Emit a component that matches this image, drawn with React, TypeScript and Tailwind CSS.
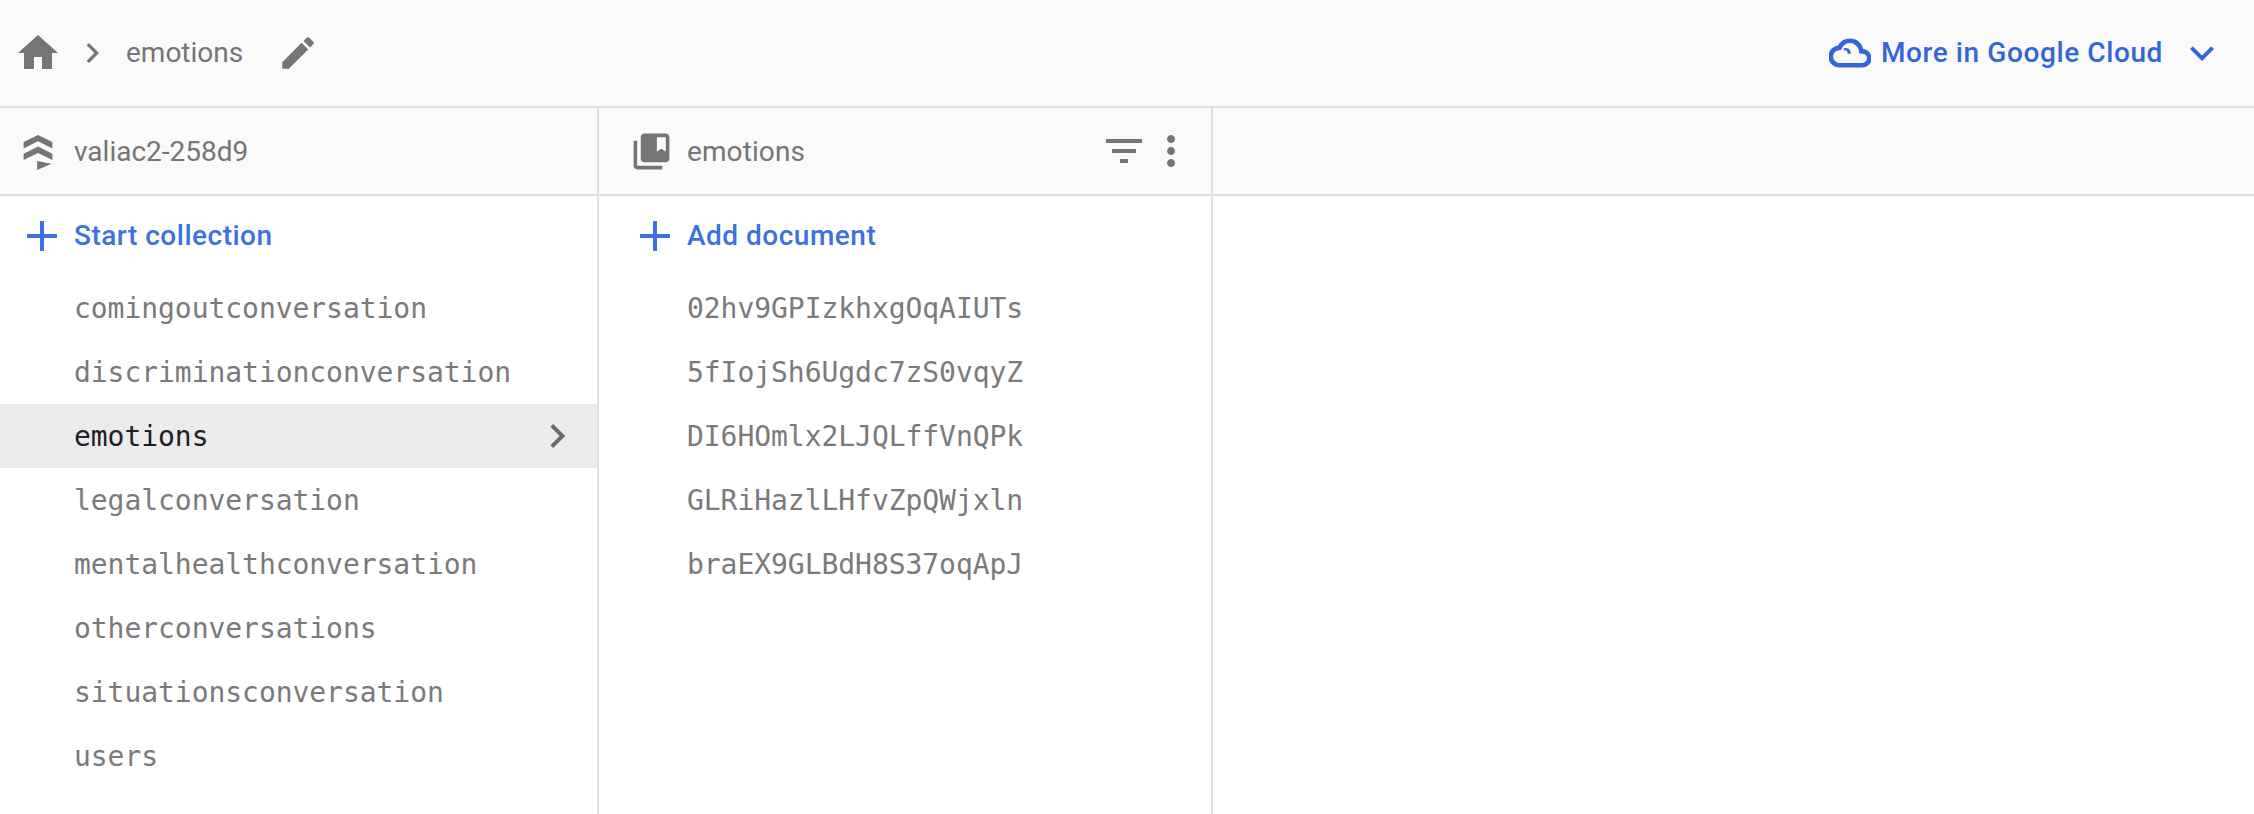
import React from "react";

const SANS = "font-['Roboto',sans-serif]";
const MONO = "font-['DejaVu_Sans_Mono',monospace]";

const collections = [
  "comingoutconversation",
  "discriminationconversation",
  "emotions",
  "legalconversation",
  "mentalhealthconversation",
  "otherconversations",
  "situationsconversation",
  "users",
];

const documents = [
  "02hv9GPIzkhxgOqAIUTs",
  "5fIojSh6Ugdc7zS0vqyZ",
  "DI6HOmlx2LJQLffVnQPk",
  "GLRiHazlLHfvZpQWjxln",
  "braEX9GLBdH8S37oqApJ",
];

function Icon({ d, className }: { d: string; className: string }) {
  return (
    <svg viewBox="0 0 24 24" fill="currentColor" className={className}>
      <path d={d} />
    </svg>
  );
}

function AddRow({ label, pl }: { label: string; pl: string }) {
  return (
    <div className={`flex h-[80px] items-center ${pl}`}>
      <svg viewBox="0 0 30 30" className="h-[30px] w-[30px] shrink-0 text-[#3b71e0]" fill="currentColor">
        <path d="M13 0h4v13h13v4H17v13h-4V17H0v-4h13z" />
      </svg>
      <span className={`ml-[17px] text-[28px] font-medium tracking-[0.5px] text-[#3b71e0] ${SANS}`}>{label}</span>
    </div>
  );
}

export default function App() {
  return (
    <main className={`h-[814px] w-[2254px] overflow-hidden bg-white ${SANS}`}>
      {/* top bar */}
      <header className="flex h-[108px] items-center border-b-2 border-[#e0e0e0] bg-[#fafafa] pl-[14px] pr-[28px]">
        <Icon d="M10 20v-6h4v6h5v-8h3L12 3 2 12h3v8z" className="h-[48px] w-[48px] text-[#757575]" />
        <Icon d="M9.6 6 8.2 7.4 12.8 12l-4.6 4.6L9.6 18l6-6z" className="ml-[11px] h-[40px] w-[40px] text-[#757575]" />
        <span className="mb-[1px] ml-[13px] text-[28px] text-[#757575]">emotions</span>
        <Icon
          d="M3 17.25V21h3.75L17.81 9.94l-3.75-3.75L3 17.25zM20.71 7.04c.39-.39.39-1.02 0-1.41l-2.34-2.34c-.39-.39-1.02-.39-1.41 0l-1.83 1.83 3.75 3.75 1.83-1.83z"
          className="ml-[34px] h-[42px] w-[42px] text-[#757575]"
        />
        <div className="ml-auto flex items-center text-[#3367d6]">
          <svg viewBox="0 0 24 24" fill="currentColor" className="h-[42px] w-[42px]">
            <path d="M19.35 10.04C18.67 6.59 15.64 4 12 4 9.11 4 6.6 5.64 5.35 8.04 2.34 8.36 0 10.91 0 14c0 3.31 2.69 6 6 6h13c2.76 0 5-2.24 5-5 0-2.64-2.05-4.78-4.65-4.96zM19 18H6c-2.21 0-4-1.79-4-4 0-2.05 1.53-3.76 3.56-3.97l1.07-.11.5-.95C8.08 7.14 9.94 6 12 6c2.62 0 4.88 1.86 5.39 4.43l.3 1.5 1.53.11c1.56.1 2.78 1.41 2.78 2.96 0 1.65-1.35 3-3 3z" stroke="currentColor" strokeWidth="0.7" />
            <path d="M8.2 9.4c1.6-.7 3.3-.2 4 1.6l.3 1.4h-1.8l-.2-1c-.3-.8-1-1-1.6-.7z" />
          </svg>
          <span className="mb-[1px] ml-[10px] text-[28px] font-medium tracking-[0.6px]">More in Google Cloud</span>
          <Icon d="M7.4 8.6 12 13.2l4.6-4.6L18 10l-6 6-6-6z" className="ml-[15px] h-[48px] w-[48px]" />
        </div>
      </header>

      <div className="flex h-[706px]">
        {/* project column */}
        <section className="w-[599px] shrink-0 border-r-2 border-[#e0e0e0]">
          <div className="flex h-[88px] items-center border-b-2 border-[#e0e0e0] bg-[#fafafa] pl-[22px]">
            <svg viewBox="0 0 32 40" fill="currentColor" className="mt-[2px] h-[36px] w-[32px] text-[#757575]">
              <path d="M0 9 16 1l16 8v7L16 8 0 16z" />
              <path d="M0 22l16-8 16 8v7l-16-8-16 8z" />
              <path d="M15 30l16 3-16 7z" />
            </svg>
            <span className="ml-[20px] mt-[1px] text-[28px] text-[#757575]">valiac2-258d9</span>
          </div>
          <AddRow label="Start collection" pl="pl-[27px]" />
          <ul className={`text-[28px] tracking-[-0.05px] ${MONO}`}>
            {collections.map((name) => (
              <li
                key={name}
                className={`flex h-[64px] items-center justify-between pl-[74px] pr-[15px] ${
                  name === "emotions" ? "bg-[#ebebeb] text-[#202124]" : "text-[#7a7a7a]"
                }`}
              >
                <span className="mt-[2px]">{name}</span>
                {name === "emotions" && (
                  <Icon d="M9.6 6 8.2 7.4 12.8 12l-4.6 4.6L9.6 18l6-6z" className="h-[48px] w-[48px] text-[#6b6b6b]" />
                )}
              </li>
            ))}
          </ul>
        </section>

        {/* documents column */}
        <section className="w-[614px] shrink-0 border-r-2 border-[#e0e0e0]">
          <div className="flex h-[88px] items-center border-b-2 border-[#e0e0e0] bg-[#fafafa] pl-[31px] pr-[16px]">
            <Icon
              d="M4 6H2v14c0 1.1.9 2 2 2h14v-2H4V6zm16-4H8c-1.1 0-2 .9-2 2v12c0 1.1.9 2 2 2h12c1.1 0 2-.9 2-2V4c0-1.1-.9-2-2-2zm0 10l-2.5-1.5L15 12V4h5v8z"
              className="h-[43px] w-[43px] text-[#757575]"
            />
            <span className="ml-[14px] mt-[1px] text-[28px] tracking-[0.1px] text-[#757575]">emotions</span>
            <Icon d="M10 18h4v-2h-4v2zM3 6v2h18V6H3zm3 7h12v-2H6v2z" className="mb-[1px] ml-auto h-[48px] w-[48px] text-[#757575]" />
            <Icon
              d="M12 8c1.1 0 2-.9 2-2s-.9-2-2-2-2 .9-2 2 .9 2 2 2zm0 2c-1.1 0-2 .9-2 2s.9 2 2 2 2-.9 2-2-.9-2-2-2zm0 6c-1.1 0-2 .9-2 2s.9 2 2 2 2-.9 2-2-.9-2-2-2z"
              className="-ml-[1px] h-[48px] w-[48px] text-[#757575]"
            />
          </div>
          <AddRow label="Add document" pl="pl-[41px]" />
          <ul className={`text-[28px] tracking-[-0.05px] text-[#7a7a7a] ${MONO}`}>
            {documents.map((id) => (
              <li key={id} className="flex h-[64px] items-center pl-[88px]">
                <span className="mt-[2px]">{id}</span>
              </li>
            ))}
          </ul>
        </section>

        {/* empty third column */}
        <section className="flex-1">
          <div className="h-[88px] border-b-2 border-[#e0e0e0] bg-[#fafafa]" />
        </section>
      </div>
    </main>
  );
}
